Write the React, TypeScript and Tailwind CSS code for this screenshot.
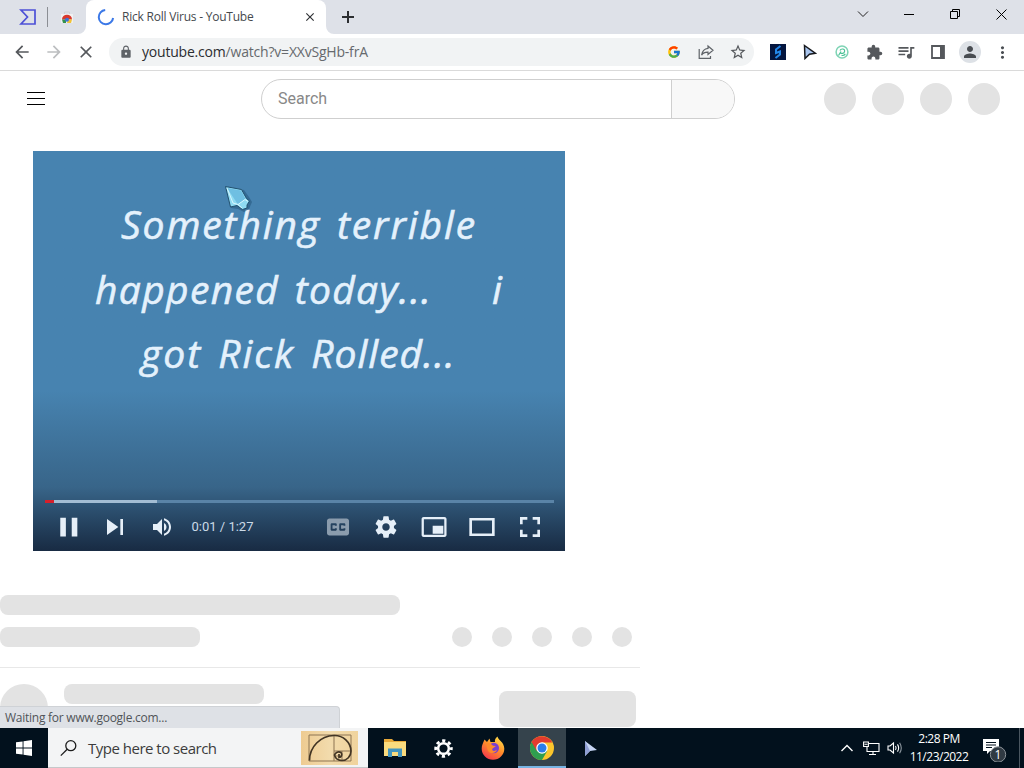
import type { ReactNode } from "react"
import { FcGoogle } from "react-icons/fc"
import {
    MdArrowBack,
    MdArrowForward,
    MdClose,
    MdExtension,
    MdLock,
    MdMoreVert,
    MdPerson,
    MdQueueMusic,
    MdStarBorder,
} from "react-icons/md"

function Slot({ children }: { children: ReactNode }) {
    return <div className="w-8 h-8 flex items-center justify-center shrink-0">{children}</div>
}

function ChromeLogo({ size }: { size: number }) {
    return (
        <svg width={size} height={size} viewBox="0 0 48 48">
            <circle cx="24" cy="24" r="24" fill="#fbc62c" />
            <path d="M24 24 L3.2 12 A24 24 0 0 0 24 48 L34.4 30 Z" fill="#2f9e4f" />
            <path d="M3.2 12 A24 24 0 0 1 44.8 13 L24 13 L13.6 30 Z" fill="#e33b2e" />
            <circle cx="24" cy="24" r="11.5" fill="#fff" />
            <circle cx="24" cy="24" r="9" fill="#2b7de9" />
        </svg>
    )
}

function TabStrip() {
    return (
        <div className="h-[34px] shrink-0 flex items-center bg-[#dee1e8]">
            <div className="w-[47px] pl-2 flex justify-center">
                <svg width="18" height="18" viewBox="0 0 18 18" fill="none" stroke="#4d50d6" strokeWidth="1.7">
                    <path d="M2 2 H16 V16 H2 L8.5 9 Z" />
                </svg>
            </div>
            <div className="w-px h-5 bg-[#8b8e94]" />
            <div className="w-[38px] flex justify-center">
                <svg width="14" height="14" viewBox="0 0 14 14">
                    <path d="M1 4 H13 V13 H1 Z" fill="#f1f1f2" />
                    <path d="M4.5 4 V2 H9.5 V4" fill="none" stroke="#d0d1d4" />
                    <path d="M2 9.5 A5 4.8 0 0 1 12 9.5 Z" fill="#d9382c" />
                    <path d="M2 9.5 H6 V13 H3 Z" fill="#36914d" />
                    <path d="M8 9.5 H12 L11 13 H7 Z" fill="#f2c334" />
                    <circle cx="7" cy="9.8" r="2" fill="#3c73d8" />
                </svg>
            </div>
            <div className="relative w-[240px] h-[34px] bg-white rounded-t-lg flex items-center pl-[11px] pr-[9px]">
                <svg className="absolute bottom-0 -left-2" width="8" height="8">
                    <path d="M8 0 V8 H0 A8 8 0 0 0 8 0" fill="#fff" />
                </svg>
                <svg className="absolute bottom-0 -right-2" width="8" height="8">
                    <path d="M0 0 V8 H8 A8 8 0 0 1 0 0" fill="#fff" />
                </svg>
                <svg width="18" height="18" viewBox="0 0 18 18" fill="none" stroke="#3b78e7" strokeWidth="2">
                    <path d="M8.2 1.9 A7.2 7.2 0 1 0 16.1 10" />
                </svg>
                <span className="ml-[7px] grow text-[12px] tracking-[-0.22px] text-[#45494d] whitespace-nowrap">
                    Rick Roll Virus - YouTube
                </span>
                <MdClose size={14} color="#303236" />
            </div>
            <svg className="ml-[15px]" width="14" height="14" viewBox="0 0 14 14" stroke="#2c2e31" strokeWidth="2">
                <path d="M7 1 V13 M1 7 H13" />
            </svg>
            <div className="ml-auto flex h-7 self-start">
                <div className="w-[46px] flex items-center justify-center">
                    <svg width="12" height="12" fill="none" stroke="#222">
                        <path d="M1 3.5 L6 8.5 L11 3.5" />
                    </svg>
                </div>
                <div className="w-[46px] flex items-center justify-center">
                    <div className="w-[10px] h-px bg-black" />
                </div>
                <div className="w-[46px] flex items-center justify-center">
                    <svg width="10" height="10" fill="none" stroke="#000">
                        <path d="M.5 2.5 H7.5 V9.5 H.5 Z M2.5 2.5 V.5 H9.5 V7.5 H7.5" />
                    </svg>
                </div>
                <div className="w-[46px] flex items-center justify-center">
                    <svg width="11" height="11" stroke="#000">
                        <path d="M.5 .5 L10.5 10.5 M10.5 .5 L.5 10.5" />
                    </svg>
                </div>
            </div>
        </div>
    )
}

function Toolbar() {
    return (
        <div className="h-[37px] shrink-0 flex items-center px-[6px] bg-white border-b border-[#dadada]">
            <Slot><MdArrowBack size={20} color="#55585c" /></Slot>
            <Slot><MdArrowForward size={20} color="#bcbec0" /></Slot>
            <Slot><MdClose size={20} color="#55585c" /></Slot>
            <div className="ml-[7px] w-[645px] h-7 rounded-full bg-[#f1f3f4] flex items-center">
                <MdLock className="ml-[10px]" size={14} color="#5f6368" />
                <span className="ml-[9px] pb-px grow text-[14px] tracking-[-0.2px] text-[#66696d] whitespace-nowrap">
                    <span className="text-[#2b2d30]">youtube.com</span>/watch?v=XXvSgHb-frA
                </span>
                <Slot><FcGoogle size={14} /></Slot>
                <Slot>
                    <svg width="16" height="16" viewBox="0 0 16 16" fill="none" stroke="#5f6368" strokeWidth="1.2">
                        <path d="M1.2 5 V14.4 H12.5 V12" />
                        <path d="M10 2 L15 6.3 L10 10.5 V8.2 C7 8.1 5 9 3.6 11.2 C4.2 7.2 6.5 4.8 10 4.4 Z" />
                    </svg>
                </Slot>
                <Slot><MdStarBorder size={18} color="#55585c" /></Slot>
            </div>
            <div className="ml-2 flex">
                <Slot>
                    <svg width="16" height="16" viewBox="0 0 16 16">
                        <path d="M0 0 H16 V16 H0 Z" fill="#04163f" />
                        <path d="M10.5 2 L6 5.5 V9 L10 7.5 V10.5 L5.5 14" fill="none" stroke="#2387e8" strokeWidth="2" />
                    </svg>
                </Slot>
                <Slot>
                    <svg width="14" height="16" viewBox="0 0 14 16">
                        <path d="M1.5 1.5 L12.5 9.3 L6.5 10.3 L2 14.5 Z" fill="#a9c5ee" stroke="#17191d" strokeWidth="1.5" />
                    </svg>
                </Slot>
                <Slot>
                    <svg width="14" height="14" viewBox="0 0 14 14" fill="none" stroke="#4dc297" strokeWidth="1.2">
                        <circle cx="7" cy="7" r="5.9" strokeWidth="1.5" stroke="#7fd4b5" />
                        <path d="M3.5 10.5 L6 6.5 M5 5.5 C6 3.2 10 3.6 9.6 6.3 C9.3 8.6 6.6 8.8 5.5 8 M6.5 10.3 C8 10.8 9.5 10 10.3 8.8" />
                    </svg>
                </Slot>
                <Slot><MdExtension size={17} color="#55585c" /></Slot>
                <Slot><MdQueueMusic size={20} color="#55585c" /></Slot>
                <Slot>
                    <svg width="14" height="14" viewBox="0 0 14 14">
                        <path d="M1 1 H13 V13 H1 Z" fill="none" stroke="#55585c" strokeWidth="1.8" />
                        <path d="M9 1 H13 V13 H9 Z" fill="#55585c" />
                    </svg>
                </Slot>
                <Slot>
                    <div className="w-[22px] h-[22px] rounded-full bg-[#dde1e6] flex items-center justify-center">
                        <MdPerson size={18} color="#494d52" />
                    </div>
                </Slot>
                <Slot><MdMoreVert size={19} color="#494d52" /></Slot>
            </div>
        </div>
    )
}

function Masthead() {
    return (
        <div className="h-14 flex items-center">
            <div className="ml-[27px] mb-px w-[18px] flex flex-col gap-[5px]">
                <div className="h-px bg-black" />
                <div className="h-px bg-black" />
                <div className="h-px bg-black" />
            </div>
            <div className="ml-[216px] w-[474px] h-10 flex rounded-full border border-[#cfcfcf] overflow-hidden">
                <div className="w-[410px] pl-4 flex items-center border-r border-[#cfcfcf] font-['Roboto'] text-[16px] text-[#888]">
                    Search
                </div>
                <div className="grow bg-[#f8f8f8]" />
            </div>
            <div className="ml-auto mr-6 flex gap-4">
                {[0, 1, 2, 3].map((i) => (
                    <div key={i} className="w-8 h-8 rounded-full bg-[#e3e3e3]" />
                ))}
            </div>
        </div>
    )
}

function PlayerIcon({ d }: { d: string }) {
    return (
        <svg className="shrink-0" width="48" height="48" viewBox="0 0 36 36" fill="#e6eff8">
            <path fillRule="evenodd" d={d} />
        </svg>
    )
}

const GEAR = "m 23.94,18.78 c .03,-0.25 .05,-0.51 .05,-0.78 0,-0.27 -0.02,-0.52 -0.05,-0.78 l 1.68,-1.32 c .15,-0.12 .19,-0.33 .09,-0.51 l -1.6,-2.76 c -0.09,-0.17 -0.31,-0.24 -0.48,-0.17 l -1.99,.8 c -0.41,-0.32 -0.86,-0.58 -1.35,-0.78 l -0.30,-2.12 c -0.02,-0.19 -0.19,-0.33 -0.39,-0.33 l -3.2,0 c -0.2,0 -0.36,.14 -0.39,.33 l -0.30,2.12 c -0.48,.2 -0.93,.47 -1.35,.78 l -1.99,-0.8 c -0.18,-0.07 -0.39,0 -0.48,.17 l -1.6,2.76 c -0.10,.17 -0.05,.39 .09,.51 l 1.68,1.32 c -0.03,.25 -0.05,.52 -0.05,.78 0,.26 .02,.52 .05,.78 l -1.68,1.32 c -0.15,.12 -0.19,.33 -0.09,.51 l 1.6,2.76 c .09,.17 .31,.24 .48,.17 l 1.99,-0.8 c .41,.32 .86,.58 1.35,.78 l .30,2.12 c .02,.19 .19,.33 .39,.33 l 3.2,0 c .2,0 .36,-0.14 .39,-0.33 l .30,-2.12 c .48,-0.2 .93,-0.47 1.35,-0.78 l 1.99,.8 c .18,.07 .39,0 .48,-0.17 l 1.6,-2.76 c .09,-0.17 .05,-0.39 -0.09,-0.51 l -1.68,-1.32 z m -5.94,2.01 c -1.54,0 -2.8,-1.25 -2.8,-2.8 0,-1.54 1.25,-2.8 2.8,-2.8 1.54,0 2.8,1.25 2.8,2.8 0,1.54 -1.25,2.8 -2.8,2.8 z"

function Player() {
    return (
        <div className="relative ml-[33px] mt-6 w-[532px] h-[400px] flex flex-col bg-linear-to-b from-[#4783b0] from-60% via-[#386589] via-84% to-[#182b43]">
            <div className="pt-[41px] font-['Open_Sans'] italic text-[39px] leading-[64.5px] text-[#e4f1fc] whitespace-pre [-webkit-text-stroke:0.6px_#e4f1fc]">
                <div className="pl-[88px] h-[64.5px] tracking-[1.9px] [word-spacing:4px]">Something terrible</div>
                <div className="pl-[62px] h-[64.5px] flex tracking-[1.35px] [word-spacing:4px]">
                    <span className="w-[397px]">happened today...</span>
                    <span>i</span>
                </div>
                <div className="pl-[108px] h-[64.5px] tracking-[2px] [word-spacing:4px]">
                    got Rick <span className="tracking-[1px]">Rolled...</span>
                </div>
            </div>
            <svg className="absolute left-[191px] top-[34px]" width="28" height="28" viewBox="0 0 28 28">
                <path d="M3 2 L20 5 L25 12 L28 17 L25 24 L20 27 L14 24 L7 23 Z" fill="#24567c" opacity=".55" />
                <path d="M1.5 1.5 L17.5 4.5 L22.5 13.5 L25.5 16 L23 20 L23 23 L18.5 24.5 L13 20.5 L6.5 22 Z" fill="#8fdbf2" stroke="#22506f" />
                <path d="M3 3 L14 19.5 L21.5 14 L17 5.5 Z" fill="#6fbfe2" />
                <path d="M3 3 L9 18 L14 19.5 L18 23 M14 19.5 L21 14.5 L24 16.5" fill="none" stroke="#d8f7ff" />
            </svg>
            <div className="mt-auto ml-3 mr-[11px] h-[3px] shrink-0 flex">
                <div className="w-[9px] bg-[#d6202b]" />
                <div className="w-[103px] bg-[#a3bdd3]" />
                <div className="grow bg-[#5a84a7]" />
            </div>
            <div className="h-[48px] shrink-0 mx-[11px] flex items-center">
                <PlayerIcon d="M12.2,25.2 H16.4 V11 H12.2 Z M20.8,25.2 H25 V11 H20.8 Z" />
                <div className="-ml-[1px]">
                    <PlayerIcon d="M12,24 L20.5,18 L12,12 Z M22,12 V24 H24 V12 Z" />
                </div>
                <svg className="ml-[6px]" width="36" height="36" viewBox="0 0 36 36" fill="#e6eff8">
                    <path d="M8,21 L12,21 L17,26 L17,10 L12,15 L8,15 Z M19,14 L19,22 C20.48,21.32 21.5,19.77 21.5,18 C21.5,16.26 20.48,14.74 19,14 Z M19,11.29 C21.89,12.15 24,14.83 24,18 C24,21.17 21.89,23.85 19,24.71 L19,26.77 C23.01,25.86 26,22.28 26,18 C26,13.72 23.01,10.14 19,9.23 Z" />
                </svg>
                <span className="ml-[10.5px] font-['Roboto'] text-[13px] text-[#cbdae7] whitespace-nowrap">0:01 / 1:27</span>
                <div className="ml-auto flex">
                    <svg width="48" height="48" viewBox="-1.6 -1.6 39.2 39.2" fill="#8b9cad">
                        <path fillRule="evenodd" d="M11,11 C9.9,11 9,11.9 9,13 V23 C9,24.1 9.9,25 11,25 H25 C26.1,25 27,24.1 27,23 V13 C27,11.9 26.1,11 25,11 Z M17,17 H15.5 V16.5 H13.5 V19.5 H15.5 V19 H17 V20 C17,20.55 16.55,21 16,21 H13 C12.45,21 12,20.55 12,20 V16 C12,15.45 12.45,15 13,15 H16 C16.55,15 17,15.45 17,16 Z M24,17 H22.5 V16.5 H20.5 V19.5 H22.5 V19 H24 V20 C24,20.55 23.55,21 23,21 H20 C19.45,21 19,20.55 19,20 V16 C19,15.45 19.45,15 20,15 H23 C23.55,15 24,15.45 24,16 Z" />
                    </svg>
                    <PlayerIcon d={GEAR} />
                    <PlayerIcon d="M25,17 H17 V23 H25 Z M27.4,12 C27.4,11.2 26.6,10.5 25.8,10.5 H10.2 C9.4,10.5 8.7,11.2 8.7,12 V24 C8.7,24.8 9.4,25.5 10.2,25.5 H25.8 C26.6,25.5 27.4,24.8 27.4,24 Z M25.7,23.8 H10.4 V12.2 H25.7 Z" />
                    <PlayerIcon d="M8.5,11.2 V24.8 H27.5 V11.2 Z M25.5,22.8 H10.5 V13.2 H25.5 Z" />
                    <PlayerIcon d="M10.5,16 H12.5 V12.5 H16 V10.5 H10.5 Z M20,10.5 V12.5 H23.5 V16 H25.5 V10.5 Z M23.5,23.5 H20 V25.5 H25.5 V20 H23.5 Z M12.5,20 H10.5 V25.5 H16 V23.5 H12.5 Z" />
                </div>
            </div>
        </div>
    )
}

function Skeleton() {
    return (
        <div className="w-[640px] mt-[44px]">
            <div className="w-[400px] h-5 rounded-lg bg-[#e3e3e3]" />
            <div className="mt-3 flex items-center justify-between">
                <div className="w-[200px] h-5 rounded-lg bg-[#e3e3e3]" />
                <div className="flex gap-5 mr-2">
                    {[0, 1, 2, 3, 4].map((i) => (
                        <div key={i} className="w-5 h-5 rounded-full bg-[#e3e3e3]" />
                    ))}
                </div>
            </div>
            <div className="mt-5 h-px bg-[#e8e8e8]" />
            <div className="mt-4 flex items-start">
                <div className="w-12 h-12 rounded-full bg-[#e3e3e3]" />
                <div className="ml-4 w-[200px] h-5 rounded-lg bg-[#e3e3e3]" />
                <div className="ml-auto mr-1 mt-[7px] w-[137px] h-9 rounded-lg bg-[#e3e3e3]" />
            </div>
        </div>
    )
}

function Taskbar() {
    return (
        <div className="h-10 shrink-0 flex items-center bg-[#02111d] text-white">
            <div className="w-12 flex justify-center">
                <svg width="16" height="16" viewBox="0 0 16 16" fill="#fff">
                    <path d="M0 2.3 L6.6 1.4 V7.5 H0 Z M7.5 1.2 L16 0 V7.5 H7.5 Z M0 8.4 H6.6 V14.6 L0 13.7 Z M7.5 8.4 H16 V16 L7.5 14.8 Z" />
                </svg>
            </div>
            <div className="w-[320px] h-10 flex items-center bg-[#f3f4f5] border-b border-[#c5c8ca]">
                <svg className="ml-3" width="18" height="18" viewBox="0 0 18 18" fill="none" stroke="#1c1c1c" strokeWidth="1.3">
                    <circle cx="10.8" cy="6.7" r="5" />
                    <path d="M7.2 10.3 L.8 16.6" />
                </svg>
                <span className="ml-[10px] pt-[2px] grow text-[15px] tracking-[-0.5px] text-[#3c3c3c] whitespace-nowrap">Type here to search</span>
                <div className="mr-[10px] w-[57px] h-[34px] flex items-center justify-center bg-linear-to-r from-[#eecb91] via-[#f2dbac] to-[#f0d39c]">
                    <svg width="44" height="28" viewBox="0 0 44 28" fill="none">
                        <path d="M1 1 H43 V27 H1 Z M26 1 V27 M26 17 H43 M34 17 V27 M26 22 H34" stroke="#8d7453" />
                        <path d="M1.5 26.5 A25 25 0 0 1 26 1.5 A16.5 16 0 0 1 43 17 A9 9.5 0 0 1 34 26.5 A7.5 7 0 0 1 26.5 21 A4.5 4.5 0 0 1 33 18.5 A3 3 0 0 1 31 23.5 V20" stroke="#423524" strokeWidth="1.7" />
                    </svg>
                </div>
            </div>
            <div className="ml-[3px] w-12 flex justify-center">
                <svg width="22" height="20" viewBox="0 0 22 20">
                    <path d="M0 1 H8 L10 3 H22 V18 H0 Z" fill="#e7a93a" />
                    <path d="M0 4 H22 V18 H0 Z" fill="#fadb7e" />
                    <path d="M4 19 V10.5 H18 V19 H14 V14 H8 V19 Z" fill="#4395bf" />
                </svg>
            </div>
            <div className="w-[49px] flex justify-center">
                <svg width="19" height="19" viewBox="0 0 20 20" fill="none" stroke="#fff">
                    <circle cx="10" cy="10" r="5.6" strokeWidth="2.6" />
                    <circle cx="10" cy="10" r="8.2" strokeWidth="3" strokeDasharray="3.4 3.04" strokeDashoffset="1.7" />
                </svg>
            </div>
            <div className="w-[50px] flex justify-center">
                <svg width="24" height="24" viewBox="0 0 24 24">
                    <defs>
                        <linearGradient id="fox" x1=".8" y1="0" x2=".2" y2="1">
                            <stop offset="0" stopColor="#ffe14b" />
                            <stop offset=".45" stopColor="#ff8f2a" />
                            <stop offset="1" stopColor="#f5314f" />
                        </linearGradient>
                    </defs>
                    <path d="M3.5 3.5 L6 6 L8.5 2.5 L9.5 6 L14 6 C13.5 4 14.5 1.8 16.5 .5 C17 4 23.3 6 23.3 12.8 A11.3 11 0 0 1 .7 12.8 C.7 9 2 7.5 3.5 3.5 Z" fill="url(#fox)" />
                    <circle cx="12.8" cy="12" r="5.2" fill="#7a3fd0" />
                    <path d="M5 8 C8 6.5 10 7.5 12 9.8 L15 10 L11.5 12.5 C10 15 14 16 16 13.5 C15.5 17.5 9 18.5 6.8 14.5 Z" fill="#ff8a2b" />
                </svg>
            </div>
            <div className="w-12 h-10 flex items-center justify-center bg-[#35434c] border-b-2 border-[#76b3e2]">
                <div className="pt-[2px]"><ChromeLogo size={24} /></div>
            </div>
            <div className="w-12 flex justify-center">
                <svg width="13" height="15" viewBox="0 0 13 15">
                    <path d="M1 0 L13 9 L6 10 L1 15 Z" fill="#c5d5f4" />
                    <path d="M1 0 L6 10 L1 15 Z" fill="#8f9fd4" />
                </svg>
            </div>
            <div className="ml-auto flex items-center">
                <svg width="14" height="10" viewBox="0 0 14 10" fill="none" stroke="#fff" strokeWidth="1.4">
                    <path d="M1.5 8 L7 2.5 L12.5 8" />
                </svg>
                <svg className="ml-[9px]" width="17" height="15" viewBox="0 0 17 15" fill="none" stroke="#fff" strokeWidth="1.1">
                    <path d="M6 2.5 H16 V10.5 H4 V6 M10 10.5 V13.5 M6 13.5 H13" />
                    <path d="M.6 1 H5.4 V5.5 H.6 Z M1.5 3.2 H4.5" />
                </svg>
                <svg className="ml-[7px]" width="16" height="14" viewBox="0 0 16 14" fill="none" stroke="#fff" strokeWidth="1.1">
                    <path d="M1 5 H3 L6.5 2 V12 L3 9 H1 Z" />
                    <path d="M8.5 5 Q9.7 7 8.5 9 M10.5 3.4 Q12.8 7 10.5 10.6" />
                    <path d="M12.6 1.8 Q16 7 12.6 12.2" stroke="#8a949c" />
                </svg>
                <div className="ml-[2px] w-[68px] text-center text-[12px] leading-[18px] tracking-[-0.5px] whitespace-nowrap">
                    <div>2:28 PM</div>
                    <div>11/23/2022</div>
                </div>
                <svg className="ml-[8px]" width="28" height="28" viewBox="0 0 28 28">
                    <path d="M2 5 H18 V17 H9 L6 20 V17 H2 Z" fill="#fff" />
                    <path d="M5 8.5 H15 M5 11 H15 M5 13.5 H11" stroke="#02111d" />
                    <circle cx="17" cy="20.5" r="7.7" fill="#303a43" stroke="#8b9298" />
                    <text x="17" y="24.7" textAnchor="middle" fontSize="12" fill="#fff">1</text>
                </svg>
                <div className="ml-[10px] mr-1 w-px h-10 bg-[#4a5660]" />
            </div>
        </div>
    )
}

export default function App() {
    return (
        <div className="w-[1024px] h-[768px] flex flex-col overflow-hidden bg-white font-['Open_Sans','Noto_Sans',sans-serif]">
            <TabStrip />
            <Toolbar />
            <main className="relative h-[657px] shrink-0 overflow-hidden">
                <Masthead />
                <Player />
                <Skeleton />
                <div className="absolute left-0 bottom-0 w-[340px] h-[22px] pl-[5px] flex items-center bg-[#dee1e6] border-t border-r border-[#cfd2d6] rounded-tr text-[12px] tracking-[-0.25px] text-[#505458] whitespace-nowrap">
                    Waiting for www.google.com...
                </div>
            </main>
            <Taskbar />
        </div>
    )
}
